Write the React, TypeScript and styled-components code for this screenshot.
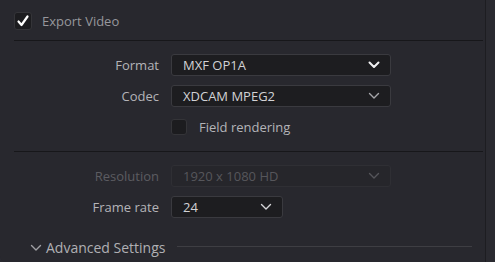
import React from 'react';
import styled, { createGlobalStyle } from 'styled-components';

const GlobalStyle = createGlobalStyle`
  html, body {
    margin: 0;
    padding: 0;
    background: #2a2a30;
  }
  body {
    font-family: 'Open Sans', 'Noto Sans', sans-serif;
  }
`;

const Panel = styled.div`
  width: 486px;
  height: 262px;
  box-sizing: border-box;
  background: #28282e;
  border-right: 1px solid #1d1d21;
  border-bottom-left-radius: 6px;
  display: flex;
  flex-direction: column;
  padding: 0 2px 0 14px;
`;

const Header = styled.div`
  display: flex;
  align-items: center;
  gap: 10px;
  height: 40px;
  padding-top: 1px;
  box-sizing: border-box;
`;

const Check = styled.div<{ size?: number }>`
  width: ${(p) => p.size || 18}px;
  height: ${(p) => p.size || 18}px;
  box-sizing: border-box;
  border-radius: 3px;
  background: #1c1c1f;
  border: 1px solid #343438;
  display: flex;
  align-items: center;
  justify-content: center;
`;

const HeaderTitle = styled.span`
  color: #97979c;
  font-size: 13px;
`;

const Divider = styled.div`
  height: 1px;
  background: #17171a;
`;

const Form = styled.div<{ top: number; bottom: number }>`
  display: grid;
  grid-template-columns: 145px auto;
  column-gap: 12px;
  row-gap: 9px;
  align-items: center;
  padding: ${(p) => p.top}px 0 ${(p) => p.bottom}px;
`;

const Label = styled.span<{ disabled?: boolean }>`
  text-align: right;
  font-size: 13px;
  color: ${(p) => (p.disabled ? '#5c5c61' : '#b4b4b8')};
`;

const Select = styled.div<{ width: number; disabled?: boolean }>`
  width: ${(p) => p.width}px;
  height: 22px;
  box-sizing: border-box;
  border: 1px solid ${(p) => (p.disabled ? '#2f2f34' : '#3a3a3f')};
  border-radius: 3px;
  background: ${(p) => (p.disabled ? '#26262b' : '#1d1d20')};
  display: flex;
  align-items: center;
  justify-content: space-between;
  padding: 0 10px 0 11px;
  font-size: 13px;
  color: ${(p) => (p.disabled ? '#56565b' : '#d2d2d5')};
`;

const CheckRow = styled.div`
  grid-column: 2;
  display: flex;
  align-items: center;
  gap: 12px;
  padding: 2px 0 0;
  font-size: 13px;
  color: #b4b4b8;
`;

const Advanced = styled.div`
  display: flex;
  align-items: center;
  gap: 4px;
  padding: 0 11px 0 16px;
  margin-top: 20px;
  color: #b0b0b4;
  font-size: 14px;
`;

const Rule = styled.div`
  flex: 1;
  height: 1px;
  background: #3e3e43;
  margin-left: 8px;
  margin-top: -2px;
`;

const Chevron = ({ color, bold }: { color: string; bold?: boolean }) => (
  <svg width="12" height="8" viewBox="0 0 12 8">
    <path
      d="M1.5 1.5 L6 6 L10.5 1.5"
      fill="none"
      stroke={color}
      strokeWidth={bold ? 2 : 1.4}
      strokeLinecap="round"
      strokeLinejoin="round"
    />
  </svg>
);

const Tick = () => (
  <svg width="14" height="14" viewBox="0 0 14 14">
    <path
      d="M2.5 7.5 L5.5 11 L11.5 2.5"
      fill="none"
      stroke="#ffffff"
      strokeWidth="2.2"
      strokeLinecap="round"
      strokeLinejoin="round"
    />
  </svg>
);

export default function App() {
  return (
    <>
      <GlobalStyle />
      <Panel>
        <Header>
          <Check>
            <Tick />
          </Check>
          <HeaderTitle>Export Video</HeaderTitle>
        </Header>
        <Divider />
        <Form top={13} bottom={15}>
          <Label>Format</Label>
          <Select width={220}>
            MXF OP1A
            <Chevron color="#f0f0f2" bold />
          </Select>
          <Label>Codec</Label>
          <Select width={220}>
            XDCAM MPEG2
            <Chevron color="#a6a6aa" />
          </Select>
          <CheckRow>
            <Check size={16} />
            Field rendering
          </CheckRow>
        </Form>
        <Divider />
        <Form top={13} bottom={0}>
          <Label disabled>Resolution</Label>
          <Select width={220} disabled>
            1920 x 1080 HD
            <Chevron color="#55555a" />
          </Select>
          <Label>Frame rate</Label>
          <Select width={112}>
            24
            <Chevron color="#d6d6d9" />
          </Select>
        </Form>
        <Advanced>
          <Chevron color="#a0a0a4" />
          Advanced Settings
          <Rule />
        </Advanced>
      </Panel>
    </>
  );
}
